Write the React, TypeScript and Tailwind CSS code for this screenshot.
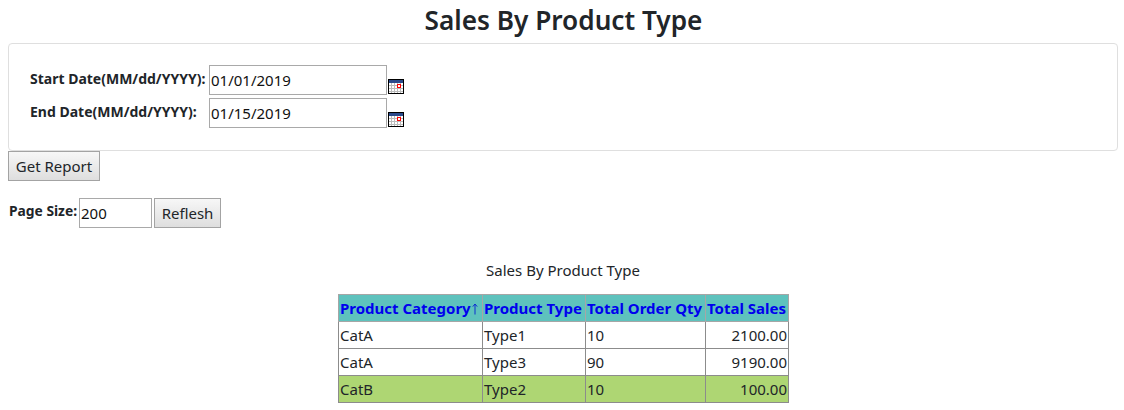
import React from 'react';

const CalendarIcon = () => (
  <svg width="16" height="16" viewBox="0 0 16 16" className="block" shapeRendering="crispEdges">
    <rect x="0" y="0" width="16" height="15" fill="#000" />
    <rect x="1" y="1" width="14" height="3" fill="#2b4a8b" />
    <rect x="1" y="4" width="14" height="10" fill="#fff" />
    <path d="M1 6.5h14M1 9.5h14M1 12.5h14M3.5 4v10M6.5 4v10M9.5 4v10M12.5 4v10" stroke="#bbb" strokeWidth="1" fill="none" />
    <rect x="9.5" y="5.5" width="3" height="3" fill="#fff" stroke="#f00" strokeWidth="1" />
  </svg>
);

const SortArrow = () => (
  <svg width="6" height="12" viewBox="0 0 6 12" className="ml-[1px] inline-block align-[-1px]">
    <path d="M3 11.5V1M0.8 3.6 3 1l2.2 2.6" stroke="#0f2fd0" strokeWidth="1" fill="none" />
  </svg>
);

const dateRows = [
  { label: 'Start Date(MM/dd/YYYY):', value: '01/01/2019' },
  { label: 'End Date(MM/dd/YYYY):', value: '01/15/2019' },
];

const rows = [
  { cat: 'CatA', type: 'Type1', qty: '10', sales: '2100.00', bg: 'bg-white' },
  { cat: 'CatA', type: 'Type3', qty: '90', sales: '9190.00', bg: 'bg-white' },
  { cat: 'CatB', type: 'Type2', qty: '10', sales: '100.00', bg: 'bg-[#aed673]' },
];

const headers = ['Product Category', 'Product Type', 'Total Order Qty', 'Total Sales'];

export default function App() {
  return (
    <div className="w-[1124px] h-[410px] overflow-hidden bg-white px-2 text-[#212529] text-[16px] font-['Noto_Sans','Open_Sans',sans-serif]">
      <h1 className="h-[43px] pl-[3px] text-center text-[26.2px] font-semibold leading-[41px] text-[#212529]">Sales By Product Type</h1>

      <div className="h-[108px] w-[1110px] rounded border border-[#dfdfdf] pt-[21px] pl-[21px]">
        {dateRows.map((row) => (
          <div key={row.label} className="flex h-[33px] items-start">
            <label className="w-[179px] pt-[4px] text-[14px] font-bold leading-[20px] whitespace-nowrap">{row.label}</label>
            <input
              readOnly
              value={row.value}
              className="h-[30px] w-[178px] border border-[#a9a9a9] px-[1px] text-[15px] text-[#111] outline-none"
            />
            <span className="ml-[1px] mt-[14px]"><CalendarIcon /></span>
          </div>
        ))}
      </div>

      <button className="block h-[30px] w-[92px] border border-[#a3a3a3] bg-gradient-to-b from-[#f7f7f7] to-[#dedede] text-[15px] leading-none text-[#212529]">
        Get Report
      </button>

      <div className="mt-[17px] flex h-[31px] items-start pl-[1px]">
        <label className="w-[70px] pt-[3px] text-[13.8px] font-bold leading-[20px] whitespace-nowrap">Page Size:</label>
        <input
          readOnly
          value="200"
          className="h-[30px] w-[73px] border border-[#a9a9a9] px-[1px] text-[15px] text-[#111] outline-none"
        />
        <button className="ml-[2px] h-[30px] w-[67px] border border-[#a3a3a3] bg-gradient-to-b from-[#f7f7f7] to-[#dedede] text-[15px] leading-none text-[#212529]">
          Reflesh
        </button>
      </div>

      <div className="mt-[31px] h-[20px] pl-[2px] text-center text-[15px] leading-[20px]">Sales By Product Type</div>

      <table className="ml-[330px] mt-[14px] w-[450px] table-fixed border-collapse border border-[#8c8c8c] text-[15px] leading-[20px]">
        <colgroup>
          <col className="w-[144px]" />
          <col className="w-[103px]" />
          <col className="w-[120px]" />
          <col className="w-[83px]" />
        </colgroup>
        <thead>
          <tr className="h-[27px] bg-[#5ec2bd]">
            {headers.map((h, i) => (
              <th key={h} className="overflow-hidden border border-[#a6a6a6] px-[1px] text-left text-[15px] font-bold whitespace-nowrap text-[#0000ee]">
                {h}
                {i === 0 && <SortArrow />}
              </th>
            ))}
          </tr>
        </thead>
        <tbody>
          {rows.map((r) => (
            <tr key={r.type} className={`h-[27px] ${r.bg}`}>
              <td className="border border-[#8c8c8c] px-[1px]">{r.cat}</td>
              <td className="border border-[#8c8c8c] px-[1px]">{r.type}</td>
              <td className="border border-[#8c8c8c] px-[1px]">{r.qty}</td>
              <td className="border border-[#8c8c8c] px-[1px] text-right">{r.sales}</td>
            </tr>
          ))}
        </tbody>
      </table>
    </div>
  );
}
